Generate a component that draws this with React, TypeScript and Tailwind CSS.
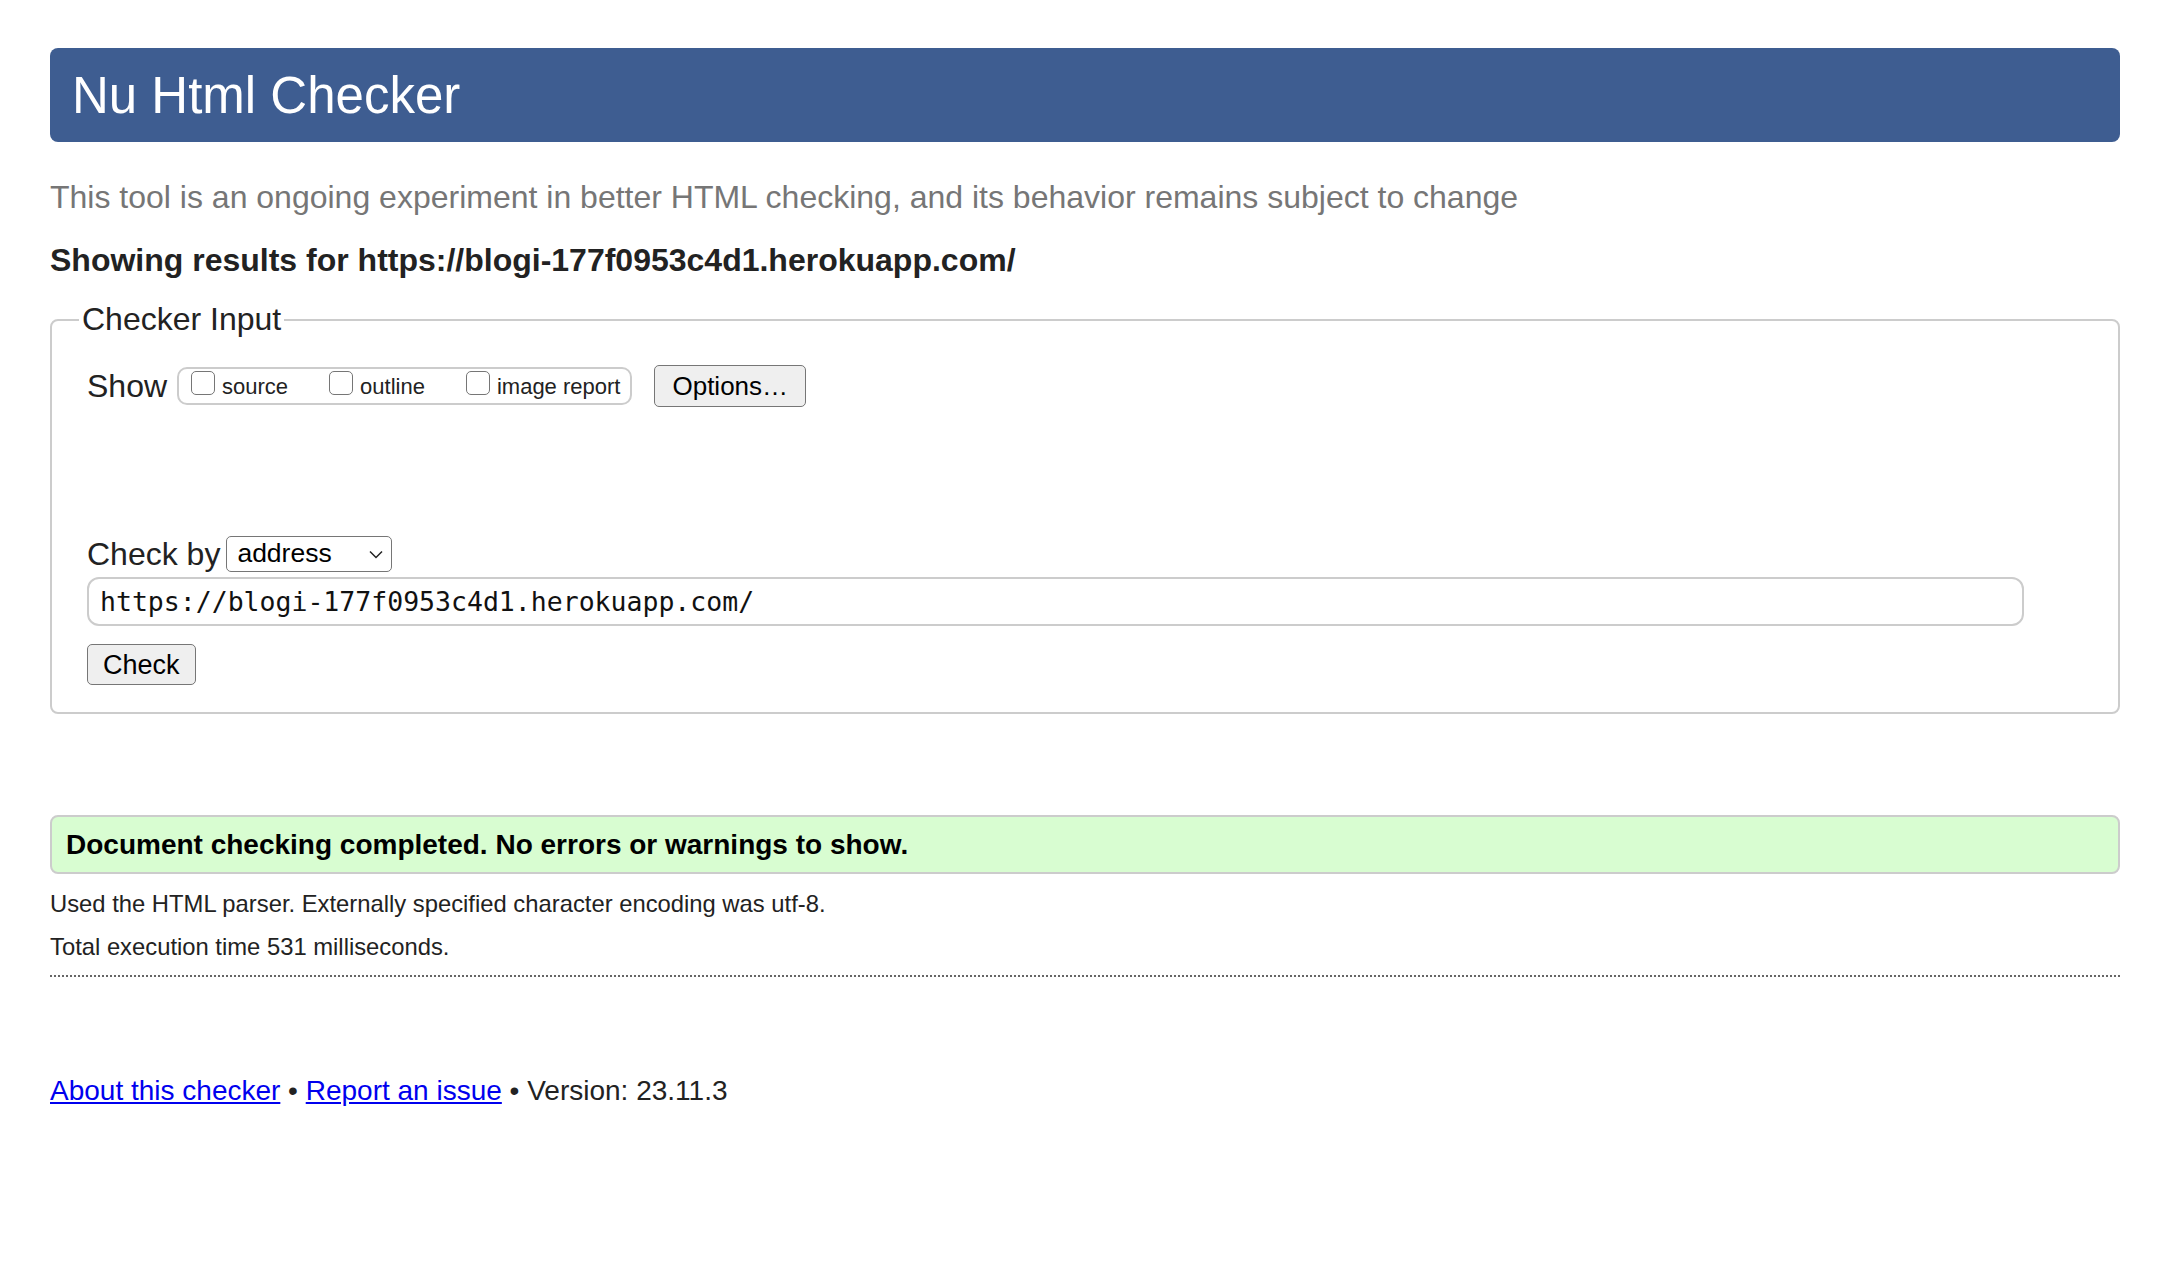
export default function App() {
  return (
    <div className="min-h-screen bg-white pl-[50px] pr-[54px] pt-[48px] font-['Liberation_Sans',Arial,Helvetica,sans-serif] text-[#222]">
      <header className="flex h-[94px] items-center rounded-[8px] bg-[#3e5d91] pl-[22px]">
        <h1 className="text-[51px] leading-none text-white">Nu Html Checker</h1>
      </header>

      <p className="mt-[37px] text-[32px] leading-[37px] text-[#767676]">
        This tool is an ongoing experiment in better HTML checking, and its behavior remains subject to change
      </p>
      <p className="mt-[26px] text-[32px] font-bold leading-[37px]">
        Showing results for https://blogi-177f0953c4d1.herokuapp.com/
      </p>

      <fieldset className="mt-[22px] rounded-[8px] border-2 border-[#cccccc] px-[35px] pb-[27px]">
        <legend className="-ml-[8px] px-[3px] text-[32px] leading-[37px]">Checker Input</legend>

        <div className="mt-[27px] flex h-[42px] items-center">
          <span className="text-[32px]">Show</span>
          <div className="ml-[10px] flex h-[38px] items-center gap-[41px] rounded-[10px] border-2 border-[#cccccc] pl-[12px] pr-[10px]">
            {["source", "outline", "image report"].map((label) => (
              <label key={label} className="flex items-center gap-[7px] text-[22px]">
                <span className="mb-[6px] h-[24px] w-[24px] rounded-[5px] border-[1.5px] border-[#767676] bg-white" />
                {label}
              </label>
            ))}
          </div>
          <button className="ml-[22px] h-[42px] rounded-[5px] border-[1.5px] border-[#767676] bg-[#efefef] px-[17px] text-[26px] text-black">
            Options…
          </button>
        </div>

        <div className="mt-[129px] flex h-[36px] items-center">
          <span className="text-[32px]">Check by</span>
          <div className="ml-[6px] flex h-[36px] w-[166px] items-center justify-between rounded-[5px] border-[1.5px] border-[#767676] bg-white pl-[10px] pr-[8px] text-[26.5px] text-black">
            <span>address</span>
            <svg width="14" height="9" viewBox="0 0 14 9" fill="none" stroke="#222" strokeWidth="1.5">
              <path d="M1 1.5l6 6 6-6" />
            </svg>
          </div>
        </div>

        <div className="mt-[5px] flex h-[49px] w-[1937px] items-center rounded-[12px] border-2 border-[#cccccc] bg-white pl-[11px] font-['DejaVu_Sans_Mono',Menlo,monospace] text-[26.5px] text-[#111]">
          https://blogi-177f0953c4d1.herokuapp.com/
        </div>

        <button className="mt-[18px] h-[41px] rounded-[5px] border-[1.5px] border-[#767676] bg-[#efefef] px-[15px] text-[27px] text-black">
          Check
        </button>
      </fieldset>

      <div className="mt-[101px] flex h-[59px] items-center rounded-[8px] border-2 border-[#cccccc] bg-[#d8fdd1] pl-[14px] text-[28px] font-bold text-black">
        Document checking completed. No errors or warnings to show.
      </div>

      <p className="mt-[8px] text-[23.8px] leading-[43px]">
        Used the HTML parser. Externally specified character encoding was utf-8.
      </p>
      <p className="text-[23.8px] leading-[43px]">Total execution time 531 milliseconds.</p>
      <div className="mt-[7px] border-t-2 border-dotted border-[#666]" />

      <footer className="mt-[96px] pb-[100px] text-[28px] leading-[36px]">
        <a href="#" className="text-[#0000ee] underline">About this checker</a>
        {" • "}
        <a href="#" className="text-[#0000ee] underline">Report an issue</a>
        {" • Version: 23.11.3"}
      </footer>
    </div>
  );
}
